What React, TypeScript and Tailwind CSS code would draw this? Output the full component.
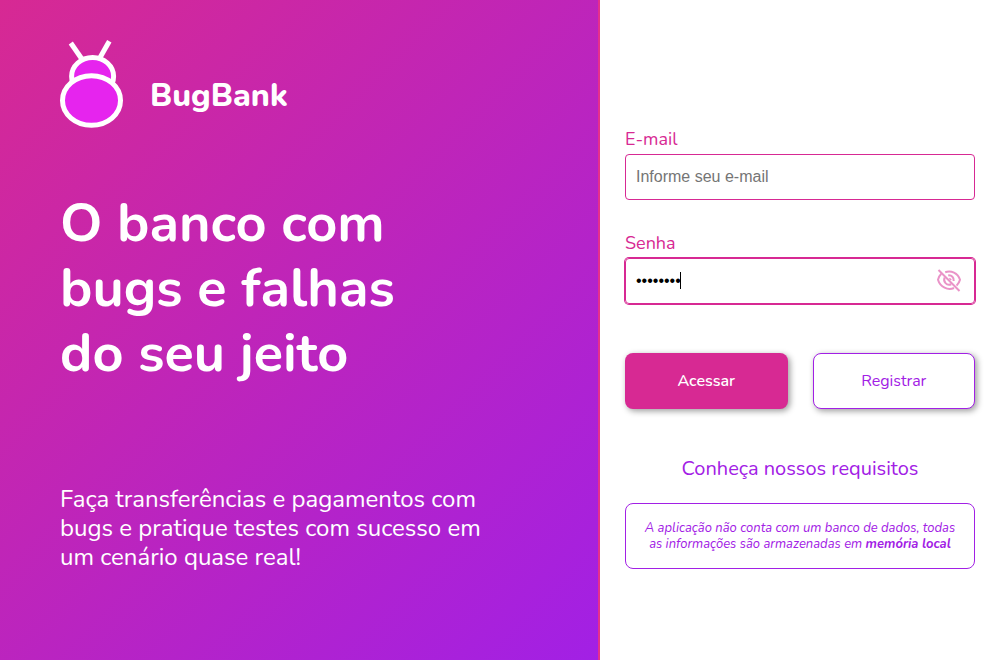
import { useState } from "react";

function BugLogo() {
  return (
    <svg width="64" height="88" viewBox="0 0 64 88" fill="none" aria-hidden="true" className="shrink-0">
      <g stroke="#fff" strokeWidth="5">
        <path d="M10.8 3 L21.5 18.5" />
        <path d="M49.3 1.2 L39.5 18.5" />
        <ellipse cx="32.6" cy="36.3" rx="21" ry="18.8" fill="#e624ee" />
        <ellipse cx="31.5" cy="60.5" rx="29" ry="24.8" fill="#e624ee" />
      </g>
    </svg>
  );
}

function EyeOffIcon() {
  return (
    <svg width="24" height="24" viewBox="0 0 24 24" fill="none" stroke="#d72993" strokeWidth="2" aria-hidden="true">
      <path d="M1.5 1 L22.5 22" />
      <path d="M8.2 3.3 C14 1.2 20.8 4 23 10.8 C22.4 13.1 21.2 15 19.6 16.6" />
      <path d="M4.3 4.8 C2.7 6.3 1.6 8.5 1 10.8 C3.2 18.2 11 21.8 17 19" />
      <path d="M11.2 6.4 C14.8 6.1 17 8.4 16.7 12" />
      <path d="M7.7 8.4 C5.7 12.8 9.7 17 14.2 15.2" />
      <path d="M12.4 9.2 L14.2 11" strokeWidth="1.5" />
    </svg>
  );
}

export default function App() {
  const [email, setEmail] = useState("");
  const [password, setPassword] = useState("password");
  const [visible, setVisible] = useState(false);

  return (
    <div className="flex min-h-screen bg-white font-['Nunito','Lato',sans-serif]">
      <section className="flex w-3/5 flex-col border-r-2 border-[#e5308c] bg-linear-135/srgb from-[#d72993] to-[#a220e5] px-[60px] pt-10 pb-[88px] text-white">
        <header className="flex items-end gap-[26px]">
          <BugLogo />
          <span className="pb-3 text-[32px] leading-10 font-extrabold">BugBank</span>
        </header>
        <h1 className="mt-[63px] text-[54px] leading-[65px] font-bold">
          O banco com
          <br />
          bugs e falhas
          <br />
          do seu jeito
        </h1>
        <p className="mt-auto pt-10 text-2xl leading-[29px]">
          Faça transferências e pagamentos com
          <br />
          bugs e pratique testes com sucesso em
          <br />
          um cenário quase real!
        </p>
      </section>

      <main className="flex w-2/5 flex-col justify-center px-[25px] pt-[35px]">
        <form onSubmit={(e) => e.preventDefault()}>
          <label htmlFor="email" className="block pb-[3px] text-lg leading-6 text-[#d72993]">
            E-mail
          </label>
          <input
            id="email"
            type="email"
            placeholder="Informe seu e-mail"
            value={email}
            onChange={(e) => setEmail(e.target.value)}
            className="block h-[46px] w-full rounded border border-[#d72993] px-2.5 font-['Liberation_Sans',Arial,sans-serif] text-base text-black outline-none placeholder:text-[#757575]"
          />

          <label htmlFor="password" className="mt-[31px] block pb-[3px] text-lg leading-6 text-[#d72993]">
            Senha
          </label>
          <div className="relative">
            <input
              id="password"
              type={visible ? "text" : "password"}
              value={password}
              onChange={(e) => setPassword(e.target.value)}
              className="block h-[46px] w-full rounded border border-[#d72993] pr-12 pl-2.5 font-['Liberation_Sans',Arial,sans-serif] text-base text-black ring-1 ring-[#d72993] outline-none"
            />
            <span className="absolute top-3.5 left-[55px] h-[17px] w-px bg-black" />
            <button
              type="button"
              aria-label="Mostrar senha"
              onClick={() => setVisible(!visible)}
              className="absolute top-[11px] right-3.5 opacity-50"
            >
              <EyeOffIcon />
            </button>
          </div>

          <div className="mt-[49px] grid grid-cols-2 gap-[25px]">
            <button
              type="submit"
              className="h-14 rounded-lg bg-[#d72993] text-base font-semibold text-white shadow-[2px_2px_6px_rgba(0,0,0,0.4)]"
            >
              Acessar
            </button>
            <button
              type="button"
              className="h-14 rounded-lg border border-[#a220e5] bg-white text-base text-[#a220e5] shadow-[2px_2px_6px_rgba(0,0,0,0.4)]"
            >
              Registrar
            </button>
          </div>
        </form>

        <a href="#requisitos" className="mt-[46px] text-center text-xl leading-7 text-[#a220e5]">
          Conheça nossos requisitos
        </a>
        <p className="mt-5 rounded-lg border border-[#a220e5] px-3 py-4 text-center text-[13px] leading-4 text-[#a220e5] italic">
          A aplicação não conta com um banco de dados, todas
          <br />
          as informações são armazenadas em <strong className="font-bold">memória local</strong>
        </p>
      </main>
    </div>
  );
}
